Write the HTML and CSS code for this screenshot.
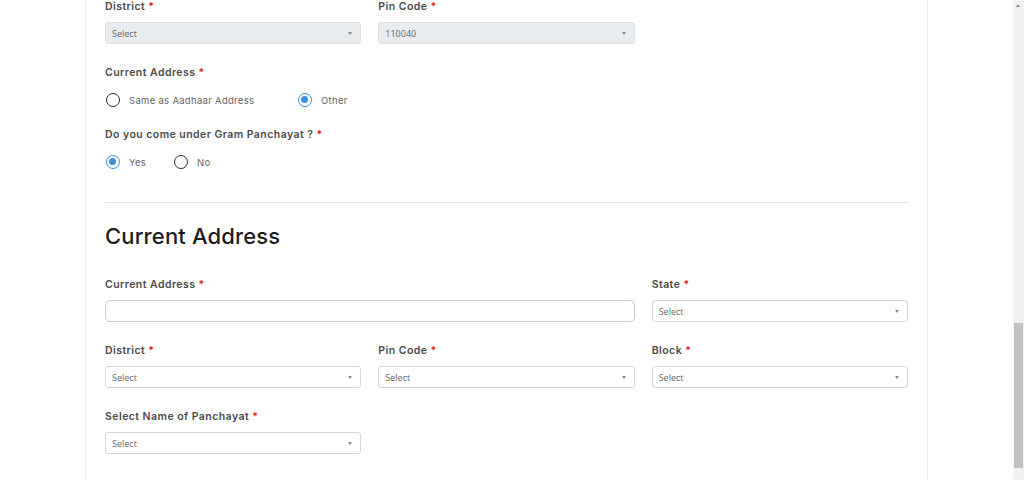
FILE: index.html
```html
<!DOCTYPE html>
<html lang="en">
<head>
<meta charset="utf-8">
<title>Address form</title>
<link rel="stylesheet" href="styles.css">
</head>
<body>
<div class="page">
  <div class="card">
    <div class="grid3 group">
      <div class="field">
        <label class="lbl">District <span class="req">*</span></label>
        <div class="select disabled"><span>Select</span><i class="caret"></i></div>
      </div>
      <div class="field">
        <label class="lbl">Pin Code <span class="req">*</span></label>
        <div class="select disabled"><span>110040</span><i class="caret"></i></div>
      </div>
    </div>

    <div class="group">
      <label class="lbl lbl-radio">Current Address <span class="req">*</span></label>
      <div class="radios">
        <label class="radio wide"><span class="dot"></span>Same as Aadhaar Address</label>
        <label class="radio"><span class="dot on"></span>Other</label>
      </div>
    </div>

    <div class="group">
      <label class="lbl lbl-radio">Do you come under Gram Panchayat ? <span class="req">*</span></label>
      <div class="radios">
        <label class="radio short"><span class="dot on"></span>Yes</label>
        <label class="radio"><span class="dot"></span>No</label>
      </div>
    </div>

    <hr class="divider">

    <h2 class="heading">Current Address</h2>

    <div class="grid3 group">
      <div class="field span2">
        <label class="lbl">Current Address <span class="req">*</span></label>
        <div class="text-input"></div>
      </div>
      <div class="field">
        <label class="lbl">State <span class="req">*</span></label>
        <div class="select"><span>Select</span><i class="caret"></i></div>
      </div>
    </div>

    <div class="grid3 group">
      <div class="field">
        <label class="lbl">District <span class="req">*</span></label>
        <div class="select"><span>Select</span><i class="caret"></i></div>
      </div>
      <div class="field">
        <label class="lbl">Pin Code <span class="req">*</span></label>
        <div class="select"><span>Select</span><i class="caret"></i></div>
      </div>
      <div class="field">
        <label class="lbl">Block <span class="req">*</span></label>
        <div class="select"><span>Select</span><i class="caret"></i></div>
      </div>
    </div>

    <div class="grid3 group">
      <div class="field">
        <label class="lbl">Select Name of Panchayat <span class="req">*</span></label>
        <div class="select"><span>Select</span><i class="caret"></i></div>
      </div>
    </div>
  </div>
</div>
<div class="scrollbar"><i class="sb-up"></i><div class="sb-thumb"></div></div>
</body>
</html>
```
FILE: styles.css
```css
html, body {
  margin: 0;
  padding: 0;
  background: #ffffff;
  height: 480px;
  overflow: hidden;
}
.page {
  margin-right: 11px;
}
.card {
  width: 803px;
  margin: 0 auto;
  padding: 0 19px 40px 19px;
  border-left: 1px solid #ececec;
  border-right: 1px solid #ececec;
  min-height: 480px;
  box-sizing: content-box;
}
.grid3 {
  display: grid;
  grid-template-columns: repeat(3, 1fr);
  column-gap: 17px;
}
.span2 {
  grid-column: span 2;
}
.group {
  margin-bottom: 21px;
}
.grid3.group {
  margin-bottom: 22px;
}
.field {
  display: flex;
  flex-direction: column;
}
.lbl {
  display: block;
  font-family: "Inter", "Noto Sans", sans-serif;
  font-weight: 600;
  font-size: 10.5px;
  line-height: 14px;
  color: #4a4a4a;
  margin-bottom: 8px;
  letter-spacing: 0.45px;
}
.lbl-radio {
  margin-bottom: 13px;
}
.req {
  color: #e21b1b;
}
.select, .text-input {
  box-sizing: border-box;
  height: 22px;
  border: 1px solid #d6d6d6;
  border-radius: 3px;
  background: #fff;
  display: flex;
  align-items: center;
  justify-content: space-between;
  padding: 0 8px 0 6px;
  font-family: "Open Sans", "Liberation Sans", sans-serif;
  font-size: 9px;
  color: #666;
}
.select.disabled {
  background: #e9ecef;
  border-color: #dcdfe3;
}
.text-input {
  border-color: #c9c9c9;
  border-radius: 5px;
}
.caret {
  width: 0;
  height: 0;
  border-left: 2.5px solid transparent;
  border-right: 2.5px solid transparent;
  border-top: 3px solid #8a8a8a;
}
.radios {
  display: flex;
  align-items: center;
  height: 14px;
}
.radio {
  display: flex;
  align-items: center;
  font-family: "Inter", "Noto Sans", sans-serif;
  font-size: 9.5px;
  letter-spacing: 0.3px;
  color: #666;
  margin-left: 1px;
}
.radio.wide {
  width: 191px;
}
.radio.short {
  width: 67px;
}
.dot {
  box-sizing: border-box;
  width: 14px;
  height: 14px;
  border-radius: 50%;
  border: 1.6px solid #2b2b2b;
  margin-right: 9px;
  position: relative;
  flex: none;
}
.dot.on {
  border-color: #3f8fdc;
}
.dot.on::after {
  content: "";
  position: absolute;
  left: 2px;
  top: 2px;
  width: 7px;
  height: 7px;
  border-radius: 50%;
  background: #3a8de0;
}
.divider {
  border: 0;
  border-top: 1px solid #e2e2e2;
  margin: 33px 0 18px 0;
}
.heading {
  font-family: "Inter", "Noto Sans", sans-serif;
  font-weight: 500;
  font-size: 22px;
  line-height: 30px;
  letter-spacing: 0.15px;
  color: #1d1d1d;
  margin: 0 0 27px 0;
}
.scrollbar {
  position: fixed;
  right: 0;
  top: 0;
  width: 11px;
  height: 480px;
  background: #f1f1f1;
}
.sb-up {
  position: absolute;
  left: 3px;
  top: 4px;
  width: 0;
  height: 0;
  border-left: 2.5px solid transparent;
  border-right: 2.5px solid transparent;
  border-bottom: 3px solid #8d8d8d;
}
.sb-thumb {
  position: absolute;
  left: 1px;
  top: 323px;
  width: 9px;
  height: 145px;
  background: #c1c1c1;
}
```
